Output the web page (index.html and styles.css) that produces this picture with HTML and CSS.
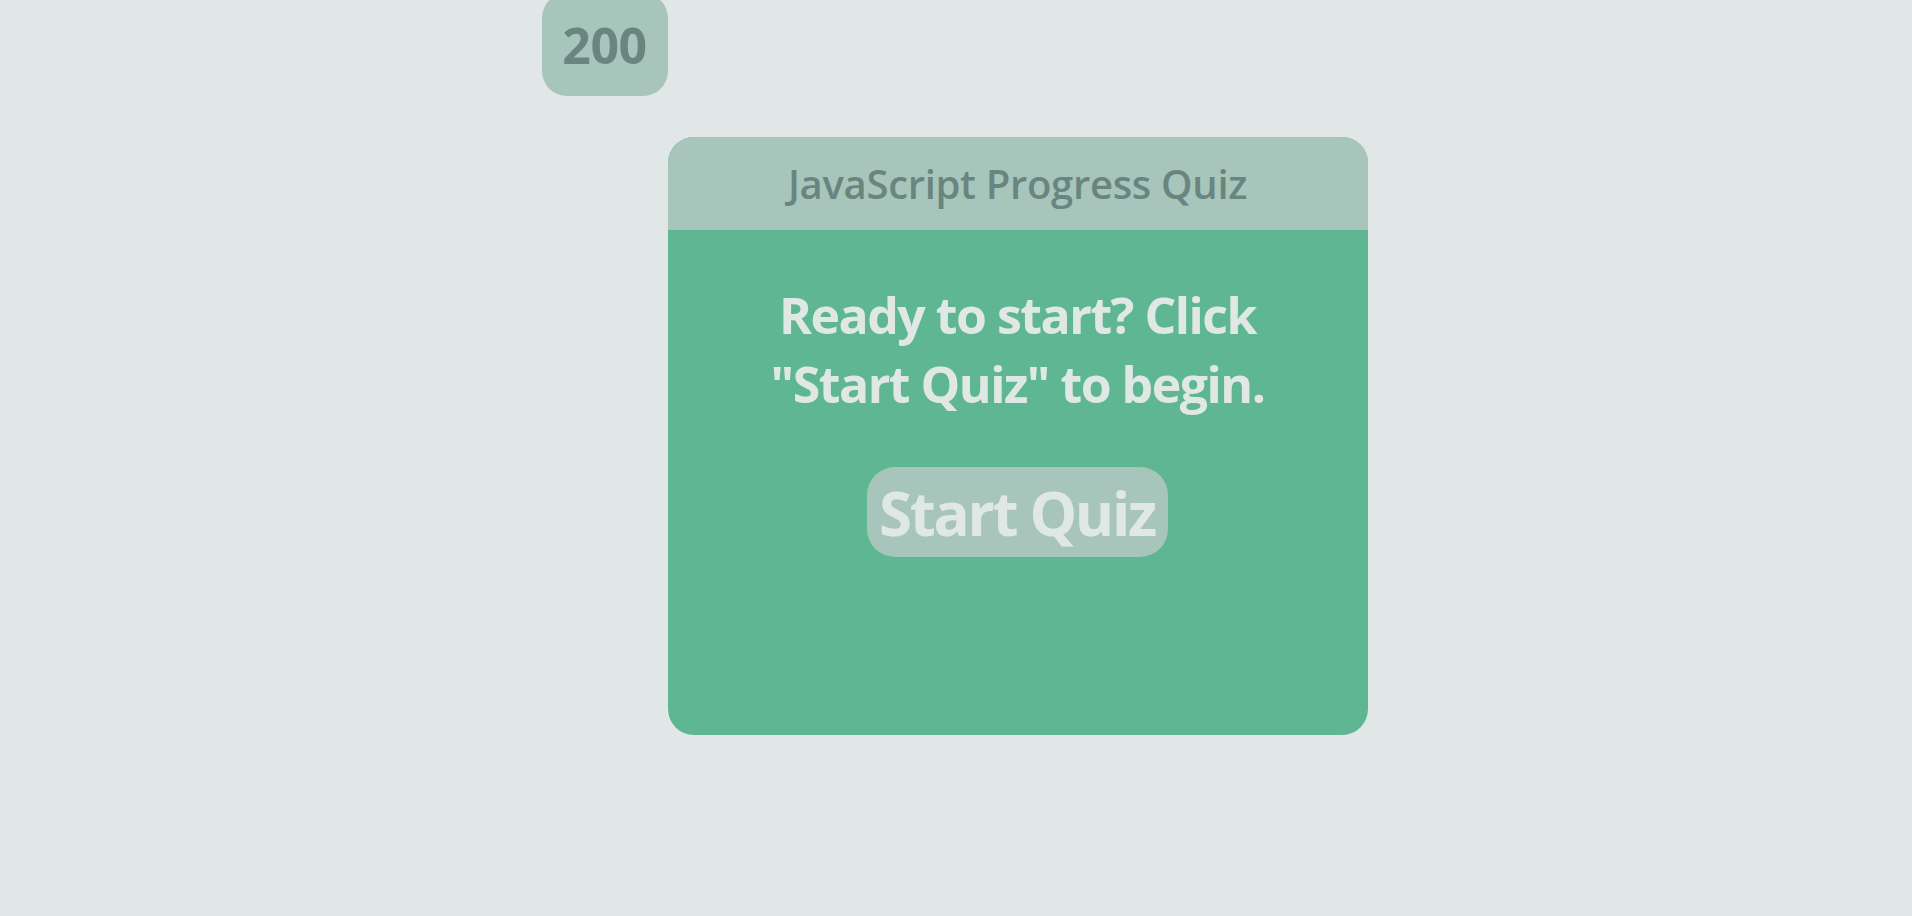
FILE: index.html
```html
<!DOCTYPE html>
<html>
<head>
<meta charset="utf-8">
<link rel="stylesheet" href="styles.css">
</head>
<body>
<div class="page">
  <div class="score">200</div>
  <div class="card">
    <div class="card-header">JavaScript Progress Quiz</div>
    <div class="card-body">
      <p class="message">Ready to start? Click "Start Quiz" to begin.</p>
      <button class="start-btn">Start Quiz</button>
    </div>
  </div>
</div>
</body>
</html>
```
FILE: styles.css
```css
html, body {
  margin: 0;
  padding: 0;
  background: #e0e7e6;
  font-family: "Open Sans", sans-serif;
}
.page {
  display: flex;
  justify-content: center;
  align-items: flex-start;
  height: 916px;
  padding-right: 3px;
  overflow: hidden;
}
.score {
  margin-top: -7px;
  width: 126px;
  height: 103px;
  border-radius: 25px;
  background: #a7c5bb;
  color: #6a8580;
  font-size: 50px;
  font-weight: 700;
  letter-spacing: -0.5px;
  display: flex;
  align-items: center;
  justify-content: center;
}
.card {
  margin-top: 137px;
  width: 700px;
  height: 598px;
  border-radius: 26px;
  overflow: hidden;
  background: #5fb693;
  display: flex;
  flex-direction: column;
}
.card-header {
  height: 93px;
  background: #a7c5bb;
  color: #6a8580;
  font-size: 40px;
  font-weight: 600;
  letter-spacing: -0.3px;
  display: flex;
  align-items: center;
  justify-content: center;
}
.card-body {
  display: flex;
  flex-direction: column;
  align-items: center;
  padding: 51px 80px 0;
}
.message {
  margin: 0;
  color: #e0e8e6;
  font-size: 50px;
  font-weight: 700;
  letter-spacing: -1.5px;
  line-height: 69px;
  text-align: center;
}
.start-btn {
  margin-top: 48px;
  border: none;
  border-radius: 28px;
  background: #a7c5bb;
  color: #e0e8e6;
  font-family: "Open Sans", sans-serif;
  font-size: 60px;
  font-weight: 700;
  letter-spacing: -2.3px;
  padding: 0 13px 0 12px;
  height: 90px;
  line-height: 92px;
}
```
